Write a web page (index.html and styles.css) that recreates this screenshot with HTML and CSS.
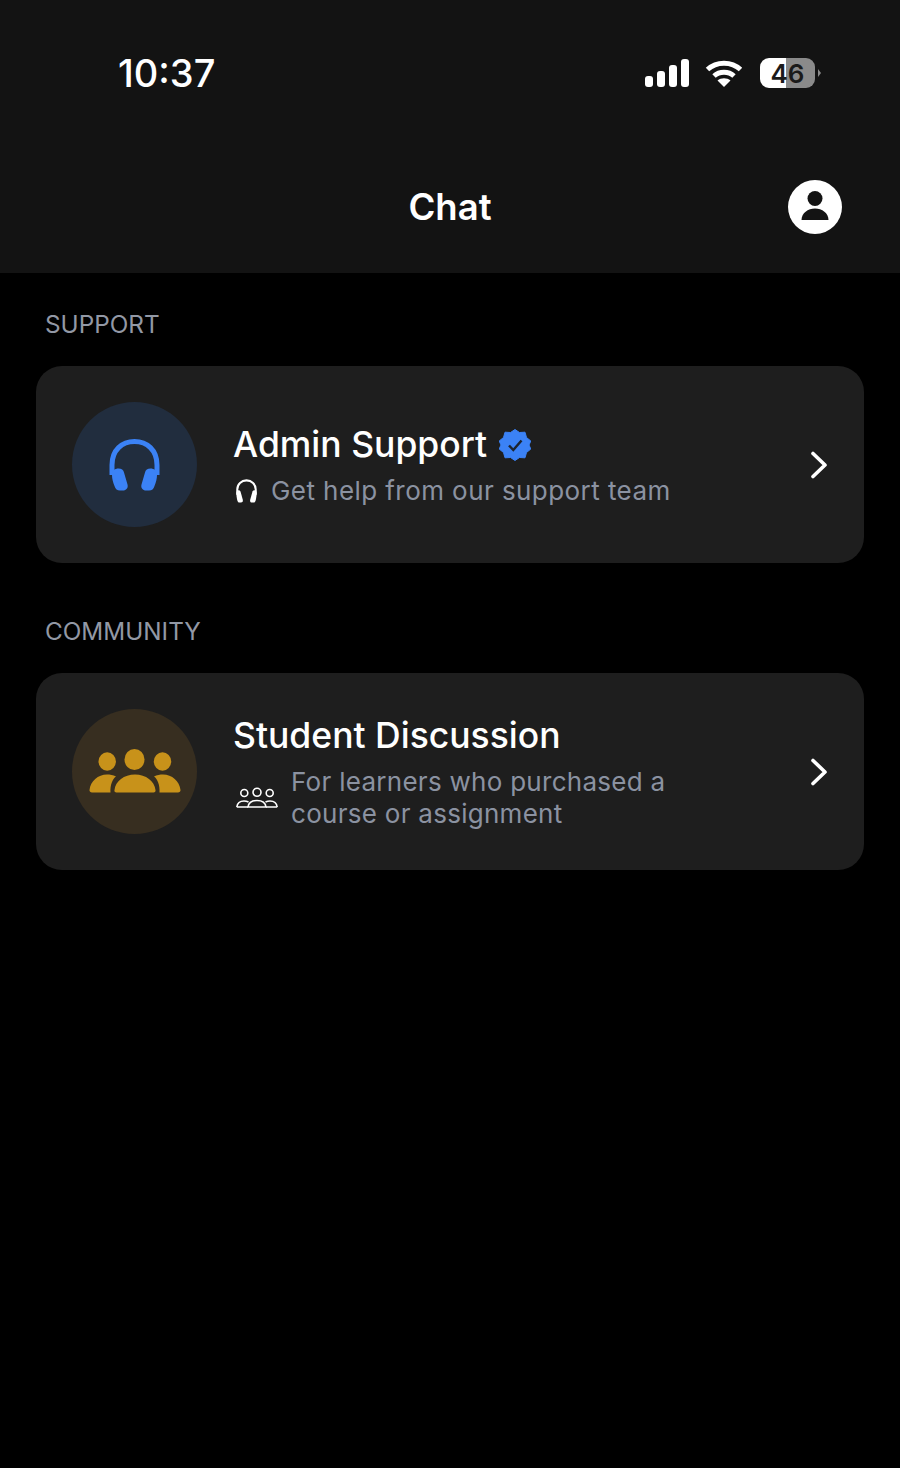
FILE: index.html
```html
<!DOCTYPE html>
<html lang="en">
<head>
    <meta charset="UTF-8">
    <meta name="viewport" content="width=device-width, initial-scale=1.0">
    <title>Chat</title>
    <link rel="stylesheet" href="styles.css">
</head>
<body>
    <div class="header">
        <div class="status-bar">
            <span class="time">10:37</span>
            <div class="status-icons">
                <svg class="signal" width="44" height="28" viewBox="0 0 44 28" fill="#fff">
                    <rect x="0" y="17" width="8" height="11" rx="3"/>
                    <rect x="12" y="12" width="8" height="16" rx="3"/>
                    <rect x="24" y="6" width="8" height="22" rx="3"/>
                    <rect x="36" y="0" width="8" height="28" rx="3"/>
                </svg>
                <svg class="wifi" width="38" height="28" viewBox="0 0 38 28" fill="none" stroke="#fff" stroke-width="5">
                    <path d="M2.500 10.500C11.500 2 26.500 2 35.500 10.500"/>
                    <path d="M9 17C14.500 12 23.500 12 29 17"/>
                    <path d="M19 28L12.500 21.500C16 18.500 22 18.500 25.500 21.500Z" fill="#fff" stroke="none"/>
                </svg>
                <div class="battery">
                    <div class="battery-body"><span>46</span></div>
                    <div class="battery-tip"></div>
                </div>
            </div>
        </div>
        <div class="nav">
            <span></span>
            <h1>Chat</h1>
            <a href="#" class="profile-btn">
                <svg width="54" height="54" viewBox="0 0 54 54">
                    <circle cx="27" cy="27" r="27" fill="#fff"/>
                    <circle cx="27" cy="18.500" r="7.500" fill="#131313"/>
                    <path d="M13.500 40C13.500 33 20 28.500 27 28.500S40.500 33 40.500 40Z" fill="#131313"/>
                </svg>
            </a>
        </div>
    </div>

    <div class="content">
        <h2 class="section-title">SUPPORT</h2>
        <a href="#" class="card">
            <div class="avatar avatar-blue">
                <svg width="52" height="52" viewBox="0 0 52 52">
                    <path d="M3 36V26C3 11 13 2.500 25.500 2.500S48 11 48 26V36" fill="none" stroke="#3b82f6" stroke-width="5"/>
                    <path d="M3 36C3 31.500 6 29.500 9.500 29.500C12.500 29.500 14.500 31 15 33.500L18.500 45.500C19.500 49 17 51.500 14 51.500H11C8 51.500 6.500 50 5.500 47C4 43 3 40 3 36Z" fill="#3b82f6"/>
                    <path d="M48 36C48 31.500 45 29.500 41.500 29.500C38.500 29.500 36.500 31 36 33.500L32.500 45.500C31.500 49 34 51.500 37 51.500H40C43 51.500 44.500 50 45.500 47C47 43 48 40 48 36Z" fill="#3b82f6"/>
                </svg>
            </div>
            <div class="card-text">
                <div class="card-title">
                    <span>Admin Support</span>
                    <svg class="verified" width="32" height="32" viewBox="0 0 32 32">
                        <path d="M16 0.500L20.500 3.500L26 3.200L27.500 8.500L31.800 12L30 16L31.800 20L27.500 23.500L26 28.800L20.500 28.500L16 31.500L11.500 28.500L6 28.800L4.500 23.500L0.200 20L2 16L0.200 12L4.500 8.500L6 3.200L11.500 3.500Z" fill="#3b82f6" stroke="#3b82f6" stroke-width="1" stroke-linejoin="round"/>
                        <path d="M10 16.500L14.300 21L22.500 11.500" fill="none" stroke="#1c2430" stroke-width="2.500"/>
                    </svg>
                </div>
                <div class="card-sub">
                    <svg class="sub-icon" width="23" height="24" viewBox="0 0 24 26">
                        <path d="M2 17V11.500C2 5.500 6.500 1.500 12 1.500S22 5.500 22 11.500V17" fill="none" stroke="#fff" stroke-width="2.200"/>
                        <path d="M1 15C1 12 4.500 11.500 5.500 13.500L8 22.500C8.500 24.500 7.500 25.500 6 25.500H4.500C3 25.500 2.500 24.500 2 23C1.500 21 1 18 1 15Z" fill="#fff"/>
                        <path d="M23 15C23 12 19.500 11.500 18.500 13.500L16 22.500C15.500 24.500 16.500 25.500 18 25.500H19.500C21 25.500 21.500 24.500 22 23C22.500 21 23 18 23 15Z" fill="#fff"/>
                    </svg>
                    <span>Get help from our support team</span>
                </div>
            </div>
            <svg class="chevron" width="18" height="28" viewBox="0 0 18 28" fill="none" stroke="#fff" stroke-width="3.600" stroke-linecap="round" stroke-linejoin="round">
                <path d="M3 2.500L15 14L3 25.500"/>
            </svg>
        </a>

        <h2 class="section-title">COMMUNITY</h2>
        <a href="#" class="card">
            <div class="avatar avatar-gold">
                <svg width="92" height="46" viewBox="0 0 92 46" fill="#c8921a">
                    <ellipse cx="45.500" cy="10.500" rx="10" ry="10.500"/>
                    <ellipse cx="18.200" cy="12.500" rx="8.700" ry="9.300"/>
                    <ellipse cx="73.500" cy="12.500" rx="8.700" ry="9.300"/>
                    <path d="M25.500 41C26.500 32 35 25.500 46 25.500S65.500 32 66.500 41C66.800 42.500 66 43.500 64.500 43.500H27.500C26 43.500 25 42.500 25.500 41Z"/>
                    <path d="M0.500 41C1.500 32 9 25.500 18 25.500C21 25.500 24 26 27 27.500C23.500 30 21 36 21.500 43.500H3C1.500 43.500 0.300 42.500 0.500 41Z"/>
                    <path d="M91.500 41C90.500 32 83 25.500 74 25.500C71 25.500 68 26 65 27.500C68.500 30 71 36 70.500 43.500H89C90.500 43.500 91.700 42.500 91.500 41Z"/>
                </svg>
            </div>
            <div class="card-text">
                <div class="card-title">
                    <span>Student Discussion</span>
                </div>
                <div class="card-sub card-sub-tight">
                    <svg class="sub-icon-group" width="42" height="22" viewBox="0 0 42 22" fill="none" stroke="#fff" stroke-width="1.600">
                        <circle cx="21" cy="5.300" r="4"/>
                        <circle cx="8.300" cy="6" r="3.500"/>
                        <circle cx="33.700" cy="6" r="3.500"/>
                        <path d="M12 20C12.500 16 16 13.500 21 13.500S29.500 16 30 20Z"/>
                        <path d="M0.800 20C1.300 16.500 4 14 8 14C9.500 14 11 14.300 12.500 15"/>
                        <path d="M41.200 20C40.700 16.500 38 14 34 14C32.500 14 31 14.300 29.500 15"/>
                        <path d="M0.800 20H12M30 20H41.200"/>
                    </svg>
                    <span>For learners who purchased a<br>course or assignment</span>
                </div>
            </div>
            <svg class="chevron" width="18" height="28" viewBox="0 0 18 28" fill="none" stroke="#fff" stroke-width="3.600" stroke-linecap="round" stroke-linejoin="round">
                <path d="M3 2.500L15 14L3 25.500"/>
            </svg>
        </a>
    </div>
</body>
</html>
```

FILE: styles.css
```css
* {
    box-sizing: border-box;
}

body {
    margin: 0;
    height: 1468px;
    overflow: hidden;
    font-family: Inter, "Liberation Sans", sans-serif;
    background: #000;
    color: #fff;
}

a {
    color: inherit;
    text-decoration: none;
}

.header {
    height: 273px;
    background-color: #131313;
}

.status-bar {
    height: 146px;
    padding: 50px 79px 0 118px;
    display: flex;
    justify-content: space-between;
    align-items: flex-start;
}

.time {
    font-size: 38px;
    line-height: 46px;
    font-weight: 500;
}

.status-icons {
    display: flex;
    align-items: center;
    margin-top: 8px;
}

.signal {
    margin-right: 16px;
}

.wifi {
    margin-right: 17px;
}

.battery {
    display: flex;
    align-items: center;
}

.battery-body {
    width: 55px;
    height: 30px;
    border-radius: 9px;
    background: linear-gradient(90deg, #fff 0, #fff 47%, #8a8a8a 47%, #8a8a8a 100%);
    display: flex;
    align-items: center;
    justify-content: center;
    color: #1a1a1a;
    font-size: 26px;
    font-weight: 600;
}

.battery-tip {
    margin-left: 3px;
    border-left: 3px solid #8a8a8a;
    border-top: 4px solid transparent;
    border-bottom: 4px solid transparent;
}

.nav {
    height: 127px;
    padding: 0 58px 5px;
    display: grid;
    grid-template-columns: 1fr auto 1fr;
    align-items: center;
}

.nav h1 {
    margin: 0;
    font-size: 36.500px;
    line-height: 44px;
    font-weight: 600;
}

.profile-btn {
    display: flex;
    justify-self: end;
}

.content {
    padding: 36px 36px 0;
}

.section-title {
    margin: 0 0 27px 9px;
    font-size: 24.300px;
    line-height: 30px;
    font-weight: 400;
    color: #9298a5;
}

.card {
    height: 197px;
    margin-bottom: 53px;
    padding: 0 36px;
    display: flex;
    align-items: center;
    background-color: #1e1e1e;
    border-radius: 26px;
}

.avatar {
    width: 125px;
    height: 125px;
    flex-shrink: 0;
    border-radius: 50%;
    display: flex;
    align-items: center;
    justify-content: center;
    margin-right: 36px;
}

.avatar-blue {
    background-color: #212d3e;
}

.avatar-gold {
    background-color: #372e20;
}

.card-text {
    flex: 1;
}

.card-title {
    display: flex;
    align-items: center;
    font-size: 35.500px;
    line-height: 44px;
    font-weight: 500;
}

.verified {
    margin-left: 12px;
}

.card-sub {
    margin-top: 8px;
    display: flex;
    align-items: center;
    font-size: 26px;
    line-height: 32px;
    letter-spacing: 0.43px;
    color: #8b92a1;
}

.card-sub-tight {
    letter-spacing: 0.28px;
}

.sub-icon {
    margin: 0 13px 0 2px;
}

.sub-icon-group {
    margin: 0 13px 0 3px;
}

.chevron {
    flex-shrink: 0;
}
```
